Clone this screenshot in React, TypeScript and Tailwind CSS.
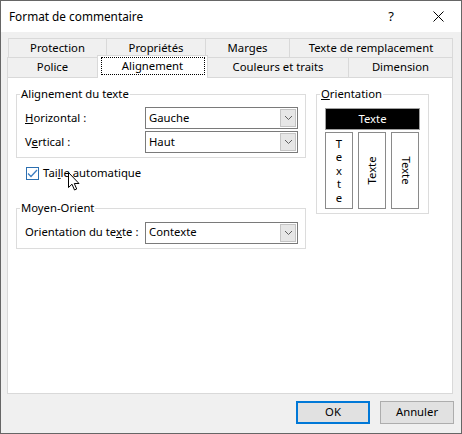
import React from 'react'

const font = { fontFamily: '"Segoe UI", "Noto Sans", Arial, sans-serif' }

function Chevron() {
  return (
    <svg width="9" height="6" viewBox="0 0 9 6" className="block">
      <path d="M1 1 L4.5 4.5 L8 1" fill="none" stroke="#606060" strokeWidth="1" />
    </svg>
  )
}

function Select({ value }: { value: string }) {
  return (
    <div className="flex h-[22px] w-[153px] items-stretch border border-[#7a7a7a] bg-white">
      <div className="flex flex-1 items-center pl-[3px] text-[11.3px] text-black">{value}</div>
      <div className="m-px flex w-[16px] items-center justify-center border border-[#c4c4c4] bg-[#e6e6e6]">
        <Chevron />
      </div>
    </div>
  )
}

function Group({ title, className, children }: { title: React.ReactNode; className: string; children: React.ReactNode }) {
  return (
    <div className={'relative border border-[#dcdcdc] ' + className}>
      <span className="absolute left-[3px] top-[-9px] bg-white px-px text-[11.3px] leading-[16px] whitespace-nowrap text-black">{title}</span>
      {children}
    </div>
  )
}

const tabBase = 'flex items-center justify-center border-l border-t border-[#d9d9d9] text-[11.3px] text-black whitespace-nowrap'

export default function App() {
  return (
    <div className="relative h-[434px] w-[462px] overflow-hidden border border-[#666666] bg-[#f0f0f0]" style={font}>
      {/* title bar */}
      <div className="flex h-[31px] items-center bg-white pl-[8px] text-[11.8px] text-black">
        <span className="flex-1">Format de commentaire</span>
        <span className="mr-[39px] text-[13px]">?</span>
        <svg width="11" height="11" viewBox="0 0 11 11" className="mr-[17px]">
          <path d="M0.5 0.5 L10.5 10.5 M10.5 0.5 L0.5 10.5" stroke="#000" strokeWidth="1" />
        </svg>
      </div>

      <div className="px-[6px] pt-[6px]">
        {/* tabs row 1 */}
        <div className="flex h-[19px] pl-px">
          <div className={tabBase + ' w-[98px]'}>Protection</div>
          <div className={tabBase + ' w-[99px]'}>Propriétés</div>
          <div className={tabBase + ' w-[84px]'}>Marges</div>
          <div className={tabBase + ' w-[164px] border-r'}>Texte de remplacement</div>
        </div>
        {/* tabs row 2 */}
        <div className="relative z-10 flex h-[20px]">
          <div className={tabBase + ' w-[90px]'}>Police</div>
          <div className="mt-[-2px] flex h-[23px] w-[111px] items-start justify-center border-x border-t border-[#d9d9d9] bg-white pt-[1px]">
            <span className="flex h-[18px] w-[104px] items-center justify-center border border-dotted border-black text-[11.3px] text-black">Alignement</span>
          </div>
          <div className={tabBase + ' w-[140px] border-l-0'}>Couleurs et traits</div>
          <div className={tabBase + ' w-[105px] border-r'}>Dimension</div>
        </div>

        {/* panel */}
        <div className="h-[317px] w-[446px] border border-[#d9d9d9] bg-white pl-[8px] pt-[16px]">
          <div className="flex gap-[10px]">
            <div className="flex w-[290px] flex-col">
              <Group title="Alignement du texte" className="h-[64px] w-[290px] pl-[8px] pt-[12px]">
                <div className="flex items-center">
                  <span className="w-[120px] text-[11.3px]"><u>H</u>orizontal :</span>
                  <Select value="Gauche" />
                </div>
                <div className="mt-[2px] flex items-center">
                  <span className="w-[120px] text-[11.3px]">V<u>e</u>rtical :</span>
                  <Select value="Haut" />
                </div>
              </Group>

              <div className="mt-[7px] flex items-center pl-[10px]">
                <div className="flex h-[13px] w-[13px] items-center justify-center border border-[#2c6fb0] bg-white">
                  <svg width="11" height="9" viewBox="0 0 11 9">
                    <path d="M1 4.5 L4 7.5 L10 1" fill="none" stroke="#3d7ec2" strokeWidth="1.3" />
                  </svg>
                </div>
                <span className="ml-[4px] text-[11.3px]">Tai<u>l</u>le automatique</span>
              </div>

              <Group title="Moyen-Orient" className="mt-[26px] h-[41px] w-[290px] pl-[8px] pt-[13px]">
                <div className="flex items-center">
                  <span className="w-[120px] whitespace-nowrap text-[11.3px]">Orientation du te<u>x</u>te :</span>
                  <Select value="Contexte" />
                </div>
              </Group>
            </div>

            <Group title={<><u>O</u>rientation</>} className="h-[120px] w-[113px] px-[8px] pt-[13px]">
              <div className="flex h-[22px] w-[95px] items-center justify-center border border-[#a0a0a0] bg-black text-[11.3px] text-white">
                Texte
              </div>
              <div className="mt-[2px] flex gap-[5px]">
                <div className="flex h-[77px] w-[28px] flex-col items-center justify-center border border-[#8a8a8a] text-[11.3px] leading-[13.4px]">
                  <span>T</span><span>e</span><span>x</span><span>t</span><span>e</span>
                </div>
                <div className="flex h-[77px] w-[28px] items-center justify-center border border-[#8a8a8a]">
                  <span className="block -rotate-90 text-[11.3px] whitespace-nowrap">Texte</span>
                </div>
                <div className="flex h-[77px] w-[28px] items-center justify-center border border-[#8a8a8a]">
                  <span className="block rotate-90 text-[11.3px] whitespace-nowrap">Texte</span>
                </div>
              </div>
            </Group>
          </div>
        </div>

        {/* buttons */}
        <div className="mt-[7px] flex justify-end gap-[10px] pr-[1px]">
          <button className="h-[23px] w-[74px] border-2 border-[#0078d7] bg-[#e1e1e1] text-[11.3px] text-black">OK</button>
          <button className="h-[23px] w-[74px] border border-[#adadad] bg-[#e1e1e1] text-[11.3px] text-black">Annuler</button>
        </div>
      </div>

      {/* mouse cursor */}
      <svg width="13" height="20" viewBox="0 0 13 20" className="pointer-events-none absolute left-[67px] top-[171px]">
        <path d="M0.5 0.5 L0.5 15.5 L4 12.2 L6.5 18 L8.7 17 L6.3 11.5 L11 11.5 Z" fill="#fff" stroke="#000" strokeWidth="1" />
      </svg>
    </div>
  )
}
